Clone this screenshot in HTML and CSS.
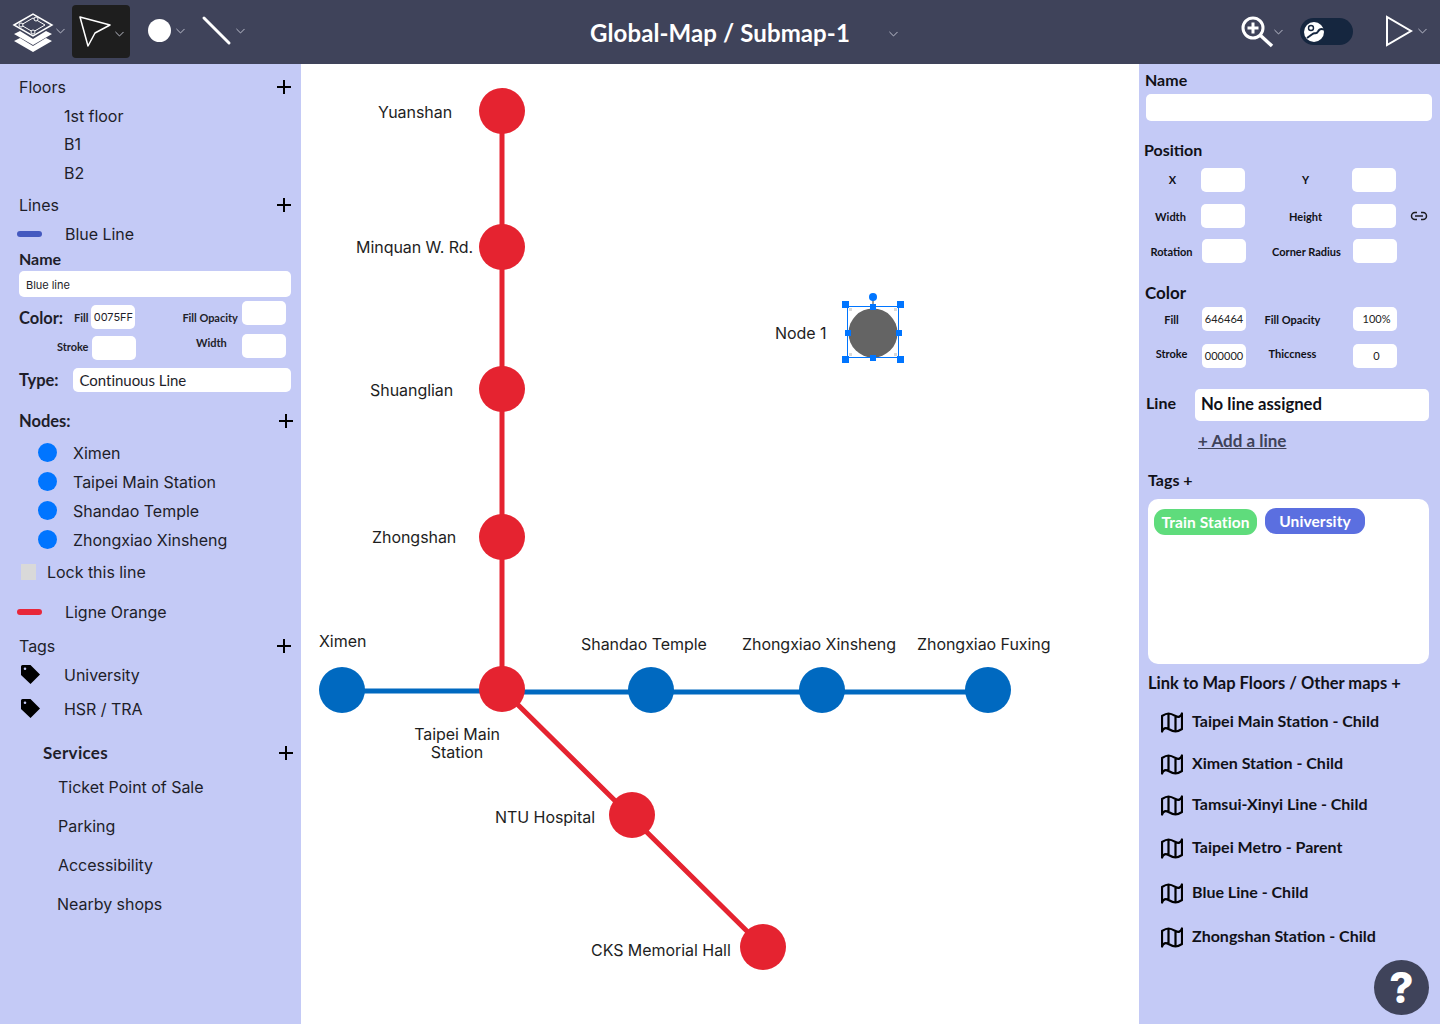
FILE: index.html
```html
<!DOCTYPE html>
<html lang="en">
<head>
    <meta charset="UTF-8">
    <meta name="viewport" content="width=device-width, initial-scale=1.0">
    <title>Global-Map / Submap-1</title>
    <link rel="stylesheet" href="styles.css">
</head>
<body>
    <svg class="defs" width="0" height="0">
        <symbol id="chev" viewBox="0 0 10 6"><path d="M.5.7 5 5.2 9.5.7" fill="none" stroke="#c9ccd8" stroke-width="1"/></symbol>
        <symbol id="plus" viewBox="0 0 14 14"><path d="M7 0v14M0 7h14" fill="none" stroke="#000" stroke-width="2"/></symbol>
        <symbol id="tag" viewBox="0 0 21 21"><path fill-rule="evenodd" d="M2.5 1H10.500L20 10.500 10.500 20 1 11V2.500A1.500 1.500 0 0 1 2.500 1ZM5 3.500a1.300 1.300 0 1 0 0 2.600 1.300 1.300 0 0 0 0-2.600Z" fill="#000"/></symbol>
        <symbol id="map" viewBox="0 0 22 21"><path d="M1 4Q5 1.500 7.500 1.500T14.500 4 21 1.500V17Q17 19.500 14.500 19.500T7.500 17 1 19.500ZM7.500 1.500V17M14.500 4V19.500" fill="none" stroke="#000" stroke-width="2.200" stroke-linejoin="round"/></symbol>
    </svg>

    <header class="topbar">
        <div class="tools">
            <button class="tool tool-logo">
                <svg width="72" height="64" viewBox="0 0 72 64">
                    <path d="M14 41 20 38 33 46 46 38 52 41 33 52Z" fill="#fff"/>
                    <path d="M14 34 20 31 33 39 46 31 52 34 33 45Z" fill="#fff"/>
                    <path d="M14 25 33 14 52 25 33 36Z" fill="#3f435a" stroke="#fff" stroke-width="1.500"/>
                    <path d="M21 25 33 18 45 25 33 32Z" fill="none" stroke="#fff"/>
                    <circle cx="21" cy="25" r="2" fill="#3f435a" stroke="#fff"/>
                    <circle cx="33" cy="32" r="2" fill="#3f435a" stroke="#fff"/>
                    <circle cx="36" cy="19" r="2" fill="#3f435a" stroke="#fff"/>
                    <use href="#chev" x="56" y="28" width="9" height="6"/>
                </svg>
            </button>
            <button class="tool tool-active">
                <svg width="58" height="53" viewBox="0 0 58 53">
                    <path d="M8 12 38 20 23 28 16 41Z" fill="none" stroke="#fff" stroke-width="1.500" stroke-linejoin="round"/>
                    <use href="#chev" x="43" y="26" width="9" height="6"/>
                </svg>
            </button>
            <button class="tool tool-shape">
                <svg width="60" height="64" viewBox="0 0 60 64">
                    <circle cx="29.500" cy="30.500" r="11.500" fill="#fff"/>
                    <use href="#chev" x="46" y="28" width="9" height="6"/>
                </svg>
            </button>
            <button class="tool tool-shape">
                <svg width="60" height="64" viewBox="0 0 60 64">
                    <path d="M14 18 39 43" stroke="#fff" stroke-width="3" stroke-linecap="round"/>
                    <use href="#chev" x="46" y="28" width="9" height="6"/>
                </svg>
            </button>
        </div>
        <h1 class="title">Global-Map / Submap-1</h1>
        <div class="top-right">
            <svg class="title-chev" width="9" height="6"><use href="#chev"/></svg>
            <div class="view-tools">
                <svg width="54" height="64" viewBox="0 0 54 64">
                    <circle cx="21" cy="28" r="10" fill="none" stroke="#fff" stroke-width="3"/>
                    <path d="M21 22.500v11M15.500 28h11" stroke="#fff" stroke-width="3"/>
                    <path d="M28 35 40 46" stroke="#fff" stroke-width="3.500"/>
                    <use href="#chev" x="42" y="29" width="9" height="6"/>
                </svg>
                <div class="toggle">
                    <svg class="toggle-knob" width="20" height="20" viewBox="0 0 20 20">
                        <circle cx="10" cy="10" r="10" fill="#fff"/>
                        <circle cx="7" cy="6" r="2.500" fill="none" stroke="#15263f" stroke-width="1.400"/>
                        <path d="M3 16 8.500 12C11 10 12 13 14 9.500 15 7.500 17 6.500 20 7.500" fill="none" stroke="#15263f" stroke-width="2"/>
                    </svg>
                </div>
                <svg class="play" width="54" height="64" viewBox="0 0 54 64">
                    <path d="M13 17V45L37 31Z" fill="none" stroke="#fff" stroke-width="2"/>
                    <use href="#chev" x="44" y="28" width="9" height="6"/>
                </svg>
            </div>
        </div>
    </header>

    <main class="workspace">
        <aside class="panel left">
            <div class="row head"><span>Floors</span><svg class="plus" width="14" height="14"><use href="#plus"/></svg></div>
            <div class="row sub">1st floor</div>
            <div class="row sub tight">B1</div>
            <div class="row sub">B2</div>

            <div class="row head gap3"><span>Lines</span><svg class="plus" width="14" height="14"><use href="#plus"/></svg></div>
            <div class="row line-item"><i class="swatch swatch-blue"></i>Blue Line</div>
            <div class="mini-label">Name</div>
            <div class="field wide">Blue line</div>

            <div class="color-row first">
                <b class="color-title">Color:</b>
                <span class="lab lab-fill">Fill</span>
                <div class="field small low">0075FF</div>
                <span class="lab lab-opacity">Fill Opacity</span>
                <div class="field small"></div>
            </div>
            <div class="color-row second">
                <span class="lab lab-stroke">Stroke</span>
                <div class="field small low"></div>
                <span class="lab lab-width">Width</span>
                <div class="field small"></div>
            </div>
            <div class="type-row">
                <b class="color-title">Type:</b>
                <div class="field type-field">Continuous Line</div>
            </div>

            <div class="row head nodes-head"><b>Nodes:</b><svg class="plus" width="14" height="14"><use href="#plus"/></svg></div>
            <div class="row node node-first"><i class="dot"></i>Ximen</div>
            <div class="row node"><i class="dot"></i>Taipei Main Station</div>
            <div class="row node"><i class="dot"></i>Shandao Temple</div>
            <div class="row node"><i class="dot"></i>Zhongxiao Xinsheng</div>
            <div class="row lock gap3"><i class="check"></i>Lock this line</div>
            <div class="row line-item orange"><i class="swatch swatch-red"></i>Ligne Orange</div>

            <div class="row head gap5"><span>Tags</span><svg class="plus" width="14" height="14"><use href="#plus"/></svg></div>
            <div class="row tag-row"><svg width="21" height="21"><use href="#tag"/></svg>University</div>
            <div class="row tag-row gap5"><svg width="21" height="21"><use href="#tag"/></svg>HSR / TRA</div>

            <div class="row head services-head"><b>Services</b><svg class="plus" width="14" height="14"><use href="#plus"/></svg></div>
            <div class="row service gap5">Ticket Point of Sale</div>
            <div class="row service">Parking</div>
            <div class="row service">Accessibility</div>
            <div class="row service last">Nearby shops</div>
        </aside>

        <section class="canvas">
            <svg class="map" width="838" height="960" viewBox="301 64 838 960">
                <path d="M342 691H502" stroke="#0069c0" stroke-width="5"/>
                <path d="M502 692H988" stroke="#0069c0" stroke-width="5"/>
                <path d="M502 111V689L763 947" fill="none" stroke="#e52330" stroke-width="5"/>
                <g fill="#0069c0">
                    <circle cx="342" cy="690" r="23"/>
                    <circle cx="651" cy="690" r="23"/>
                    <circle cx="822" cy="690" r="23"/>
                    <circle cx="988" cy="690" r="23"/>
                </g>
                <g fill="#e52330">
                    <circle cx="502" cy="111" r="23"/>
                    <circle cx="502" cy="247" r="23"/>
                    <circle cx="502" cy="389" r="23"/>
                    <circle cx="502" cy="537" r="23"/>
                    <circle cx="502" cy="689" r="23"/>
                    <circle cx="632" cy="815" r="23"/>
                    <circle cx="763" cy="947" r="23"/>
                </g>
                <path d="M873 297V307" stroke="#9a9a9a" stroke-width="2"/>
                <g fill="#d9d9d9">
                    <rect x="849" y="308" width="3" height="3"/>
                    <rect x="894" y="308" width="3" height="3"/>
                    <rect x="849" y="353" width="3" height="3"/>
                    <rect x="894" y="353" width="3" height="3"/>
                </g>
                <circle cx="873" cy="333" r="24.500" fill="#646464"/>
                <rect x="847.500" y="306.500" width="51" height="51" fill="none" stroke="#0075ff"/>
                <g fill="#0075ff">
                    <circle cx="873" cy="297" r="4"/>
                    <rect x="842" y="301" width="7" height="7"/>
                    <rect x="897" y="301" width="7" height="7"/>
                    <rect x="842" y="356" width="7" height="7"/>
                    <rect x="897" y="356" width="7" height="7"/>
                    <rect x="870" y="304" width="6" height="6"/>
                    <rect x="870" y="355" width="6" height="6"/>
                    <rect x="845" y="330" width="6" height="6"/>
                    <rect x="896" y="330" width="6" height="6"/>
                </g>
            </svg>
            <span class="station st-yuanshan">Yuanshan</span>
            <span class="station st-minquan">Minquan W. Rd.</span>
            <span class="station st-shuanglian">Shuanglian</span>
            <span class="station st-zhongshan">Zhongshan</span>
            <span class="station st-ximen">Ximen</span>
            <span class="station st-shandao">Shandao Temple</span>
            <span class="station st-xinsheng">Zhongxiao Xinsheng</span>
            <span class="station st-fuxing">Zhongxiao Fuxing</span>
            <span class="station st-taipei">Taipei Main<br>Station</span>
            <span class="station st-ntu">NTU Hospital</span>
            <span class="station st-cks">CKS Memorial Hall</span>
            <span class="station st-node">Node 1</span>
        </section>

        <aside class="panel right">
            <div class="r-title r-name">Name</div>
            <div class="field r-name-field"></div>

            <div class="r-title r-position">Position</div>
            <div class="prop-row pos r1"><span>X</span><div class="field small"></div><span class="shift">Y</span><div class="field small"></div></div>
            <div class="prop-row pos r2"><span class="nudge">Width</span><div class="field small"></div><span class="shift">Height</span><div class="field small"></div>
                <svg class="chain" width="18" height="10" viewBox="0 0 18 10"><path d="M7 1.500H5a3.500 3.500 0 0 0 0 7H7M11 1.500h2a3.500 3.500 0 0 1 0 7H11M5 5h8" fill="none" stroke="#1b1b1f" stroke-width="1.500"/></svg>
            </div>
            <div class="prop-row pos r3"><span class="nudge">Rotation</span><div class="field small"></div><span class="shift">Corner Radius</span><div class="field small"></div></div>

            <div class="r-title r-color">Color</div>
            <div class="prop-row col r4"><span>Fill</span><div class="field small val low">646464</div><span class="back">Fill Opacity</span><div class="field small val pct">100%</div></div>
            <div class="prop-row col r5"><span>Stroke</span><div class="field small val">000000</div><span class="back">Thiccness</span><div class="field small val pct">0</div></div>

            <div class="line-row">
                <b>Line</b>
                <div class="field line-field">No line assigned</div>
            </div>
            <a class="add-line" href="#">+ Add a line</a>

            <div class="r-title r-tags">Tags +</div>
            <div class="tag-box">
                <span class="chip chip-green">Train Station</span>
                <span class="chip chip-blue">University</span>
            </div>

            <div class="r-title r-link">Link to Map Floors / Other maps +</div>
            <ul class="links">
                <li><svg width="22" height="21"><use href="#map"/></svg>Taipei Main Station - Child</li>
                <li><svg width="22" height="21"><use href="#map"/></svg>Ximen Station - Child</li>
                <li><svg width="22" height="21"><use href="#map"/></svg>Tamsui-Xinyi Line - Child</li>
                <li><svg width="22" height="21"><use href="#map"/></svg>Taipei Metro - Parent</li>
                <li><svg width="22" height="21"><use href="#map"/></svg>Blue Line - Child</li>
                <li><svg width="22" height="21"><use href="#map"/></svg>Zhongshan Station - Child</li>
            </ul>
            <button class="help">?</button>
        </aside>
    </main>
</body>
</html>
```

FILE: styles.css
```css
* {
    box-sizing: border-box;
}
body {
    margin: 0;
    width: 1440px;
    height: 1024px;
    overflow: hidden;
    font-family: Inter, "Liberation Sans", sans-serif;
    color: #1e1e2a;
    background: #fff;
}
.defs {
    position: absolute;
}

/* top bar */
.topbar {
    display: grid;
    grid-template-columns: 1fr auto 1fr;
    height: 64px;
    background: #3f435a;
}
.tools {
    display: flex;
}
.tool {
    display: block;
    padding: 0;
    border: none;
    background: none;
    height: 64px;
}
.tool svg {
    display: block;
}
.tool-active {
    width: 58px;
    height: 53px;
    margin-top: 5px;
    background: #1e1e1e;
    border-radius: 4px;
}
.title {
    margin: 0;
    font-family: Lato, sans-serif;
    font-weight: 700;
    font-size: 24px;
    letter-spacing: .1px;
    line-height: 65px;
    color: #fff;
}
.top-right {
    display: flex;
}
.title-chev {
    margin: 31px 0 0 39px;
}
.view-tools {
    display: flex;
    margin-left: 334px;
}
.toggle {
    width: 53px;
    height: 27px;
    margin: 18px 0 0 14px;
    padding: 4px;
    background: #15263f;
    border-radius: 14px;
}
.toggle-knob {
    display: block;
}
.play {
    margin-left: 21px;
}

.workspace {
    display: grid;
    grid-template-columns: 301px 838px 301px;
    height: 960px;
}
.panel {
    position: relative;
    background: #c4caf6;
}

/* left panel */
.left {
    padding: 8px 0 0 19px;
    font-size: 16px;
    letter-spacing: -.03px;
}
.row {
    display: flex;
    align-items: center;
    height: 29px;
}
.head {
    justify-content: space-between;
    padding-right: 10px;
}
.sub {
    padding-left: 45px;
}
.tight {
    margin-top: -1px;
}
.gap3 {
    margin-top: 3px;
}
.gap5 {
    margin-top: 5px;
}
.line-item {
    margin-left: -2px;
}
.swatch {
    width: 25px;
    height: 6px;
    margin-right: 23px;
    border-radius: 3px;
}
.swatch-blue {
    background: #4459bf;
}
.swatch-red {
    background: #e8273a;
}
.orange {
    margin-top: 11px;
}
.mini-label {
    height: 20px;
    margin-top: 2px;
    font-family: Lato, sans-serif;
    font-weight: 700;
    font-size: 16px;
    line-height: 18px;
}
.field {
    background: #fff;
    border-radius: 5px;
}
.wide {
    width: 272px;
    height: 26px;
    margin-top: 1px;
    padding-left: 7px;
    font-size: 11px;
    line-height: 28px;
}
.color-row {
    display: flex;
    align-items: flex-start;
    height: 28px;
    margin-top: 4px;
}
.color-row.second {
    height: 26px;
    margin-top: 5px;
    padding-left: 38px;
}
.small {
    flex: none;
    width: 44px;
    height: 24px;
    font-size: 11px;
    line-height: 24px;
    text-align: center;
}
.low {
    margin-top: 4px;
}
.second .low {
    margin-top: 2px;
}
.color-title {
    font-family: Lato, sans-serif;
    font-size: 16.500px;
    line-height: 24px;
}
.first .color-title {
    margin-top: 5px;
}
.lab {
    font-family: Lato, sans-serif;
    font-weight: 700;
    font-size: 11px;
    line-height: 14px;
    white-space: nowrap;
}
.lab-fill {
    margin: 10px 3px 0 11px;
}
.lab-opacity {
    width: 60px;
    margin: 10px 0 0 47px;
}
.lab-stroke {
    width: 35px;
    margin-top: 6px;
}
.lab-width {
    width: 46px;
    margin: 2px 0 0 60px;
}
.type-row {
    display: flex;
    height: 24px;
    margin-top: 8px;
}
.type-field {
    width: 218px;
    height: 24px;
    margin-left: 14px;
    padding-left: 7px;
    font-family: Lato, sans-serif;
    font-size: 15px;
    line-height: 24px;
}
.nodes-head {
    margin-top: 14px;
    padding-right: 8px;
}
.nodes-head b,
.services-head b {
    font-family: Lato, sans-serif;
    font-size: 16.500px;
}
.services-head b {
    font-size: 17px;
    letter-spacing: .3px;
}
.node-first {
    margin-top: 3px;
}
.dot {
    width: 19px;
    height: 19px;
    margin: 0 16px 0 19px;
    border-radius: 50%;
    background: #0075ff;
}
.check {
    width: 15px;
    height: 16px;
    margin: 0 11px 0 2px;
    background: #d9d9d9;
}
.tag-row svg {
    margin: 0 23px 0 1px;
}
.services-head {
    margin-top: 15px;
    padding: 0 8px 0 24px;
}
.service {
    margin-top: 10px;
    padding-left: 39px;
}
.service.gap5 {
    margin-top: 5px;
}
.service.last {
    padding-left: 38px;
}

/* canvas */
.canvas {
    position: relative;
    background: #fff;
}
.map {
    display: block;
}
.station {
    position: absolute;
    font-size: 16px;
    letter-spacing: -.05px;
    line-height: 20px;
    color: #1e1e1e;
    white-space: nowrap;
}
.st-yuanshan { left: 77px; top: 38px; }
.st-minquan { left: 55px; top: 173px; }
.st-shuanglian { left: 69px; top: 316px; }
.st-zhongshan { left: 71px; top: 463px; }
.st-ximen { left: 18px; top: 567px; }
.st-shandao { left: 280px; top: 570px; }
.st-xinsheng { left: 441px; top: 570px; }
.st-fuxing { left: 616px; top: 570px; }
.st-taipei { left: 106px; top: 661px; width: 100px; line-height: 18px; text-align: center; }
.st-ntu { left: 194px; top: 743px; }
.st-cks { left: 290px; top: 876px; }
.st-node { left: 474px; top: 259px; }

/* right panel */
.right {
    padding: 7px 0 0 6px;
    font-family: Lato, sans-serif;
    color: #111118;
}
.r-title {
    height: 20px;
    font-weight: 700;
    font-size: 16px;
    line-height: 20px;
}
.r-name,
.r-tags {
    line-height: 18px;
}
.r-name-field {
    width: 286px;
    height: 27px;
    margin: 3px 0 0 1px;
}
.r-position {
    margin: 19px 0 0 -1px;
}
.prop-row {
    display: grid;
    grid-template-columns: 57px 44px 107px 44px auto;
    align-items: center;
    margin-left: -1px;
    height: 24px;
    font-weight: 700;
    font-size: 11px;
}
.prop-row span {
    text-align: center;
    white-space: nowrap;
}
.prop-row .shift {
    padding-left: 14px;
}
.prop-row .nudge {
    padding-right: 4px;
}
.r1 {
    margin-top: 8px;
}
.r1 span {
    margin-top: -2px;
}
.r2 {
    margin-top: 12px;
}
.r3 {
    margin: 11px 0 0 0;
}
.chain {
    margin-left: 14px;
}
.r-color {
    margin-top: 20px;
    font-size: 17px;
}
.col {
    margin-left: 0;
}
.col span {
    padding-right: 4px;
}
.col .back {
    padding-right: 14px;
}
.val {
    font-weight: 400;
    color: #222;
}
.pct {
    padding-left: 3px;
}
.r4 {
    height: 25px;
    margin-top: 3px;
}
.r4 span {
    margin-top: 2px;
}
.r4 .low {
    margin-top: 1px;
}
.r5 {
    margin-top: 13px;
}
.r5 span {
    margin-top: -6px;
}
.line-row {
    display: flex;
    align-items: center;
    height: 32px;
    margin: 21px 0 0 1px;
    font-size: 16px;
}
.line-row b {
    width: 31px;
    margin-top: -6px;
}
.line-field {
    width: 234px;
    height: 32px;
    margin-left: 18px;
    padding-left: 6px;
    font-weight: 700;
    font-size: 16.700px;
    line-height: 30px;
}
.add-line {
    display: block;
    height: 20px;
    margin: 10px 0 0 53px;
    font-weight: 700;
    font-size: 17px;
    line-height: 20px;
    color: #3f435a;
}
.r-tags {
    margin: 20px 0 0 3px;
}
.tag-box {
    display: flex;
    align-items: flex-start;
    gap: 8px;
    width: 281px;
    height: 165px;
    margin: 8px 0 0 3px;
    padding: 9px 6px;
    background: #fff;
    border-radius: 10px;
}
.chip {
    height: 26px;
    padding: 0 6px;
    border-radius: 11px;
    font-weight: 700;
    font-size: 15.500px;
    letter-spacing: .1px;
    line-height: 26px;
    color: #fff;
    white-space: nowrap;
    text-align: center;
}
.chip-green {
    width: 103px;
    margin-top: 1px;
    background: #5fdc7c;
}
.chip-blue {
    width: 100px;
    background: #5b6fe0;
}
.r-link {
    margin: 9px 0 0 3px;
    font-size: 16.500px;
}
.links {
    display: flex;
    flex-direction: column;
    gap: 18px;
    margin: 16px 0 0 16px;
    padding: 0;
    list-style: none;
}
.links li {
    display: flex;
    align-items: center;
    height: 24px;
    padding-bottom: 2px;
    font-weight: 700;
    font-size: 16px;
    white-space: nowrap;
}
.links li:nth-child(3) {
    margin-top: -1px;
}
.links li:nth-child(4) {
    margin-top: 1px;
}
.links li:nth-child(5) {
    margin-top: 3px;
}
.links li:nth-child(6) {
    margin-top: 2px;
}
.links svg {
    margin: 4px 9px 0 0;
}
.help {
    position: absolute;
    left: 235px;
    top: 896px;
    width: 55px;
    height: 55px;
    padding: 0;
    border: none;
    border-radius: 50%;
    background: #3f435a;
    font-family: Inter, sans-serif;
    font-weight: 800;
    font-size: 42px;
    line-height: 53px;
    color: #fff;
}
```
